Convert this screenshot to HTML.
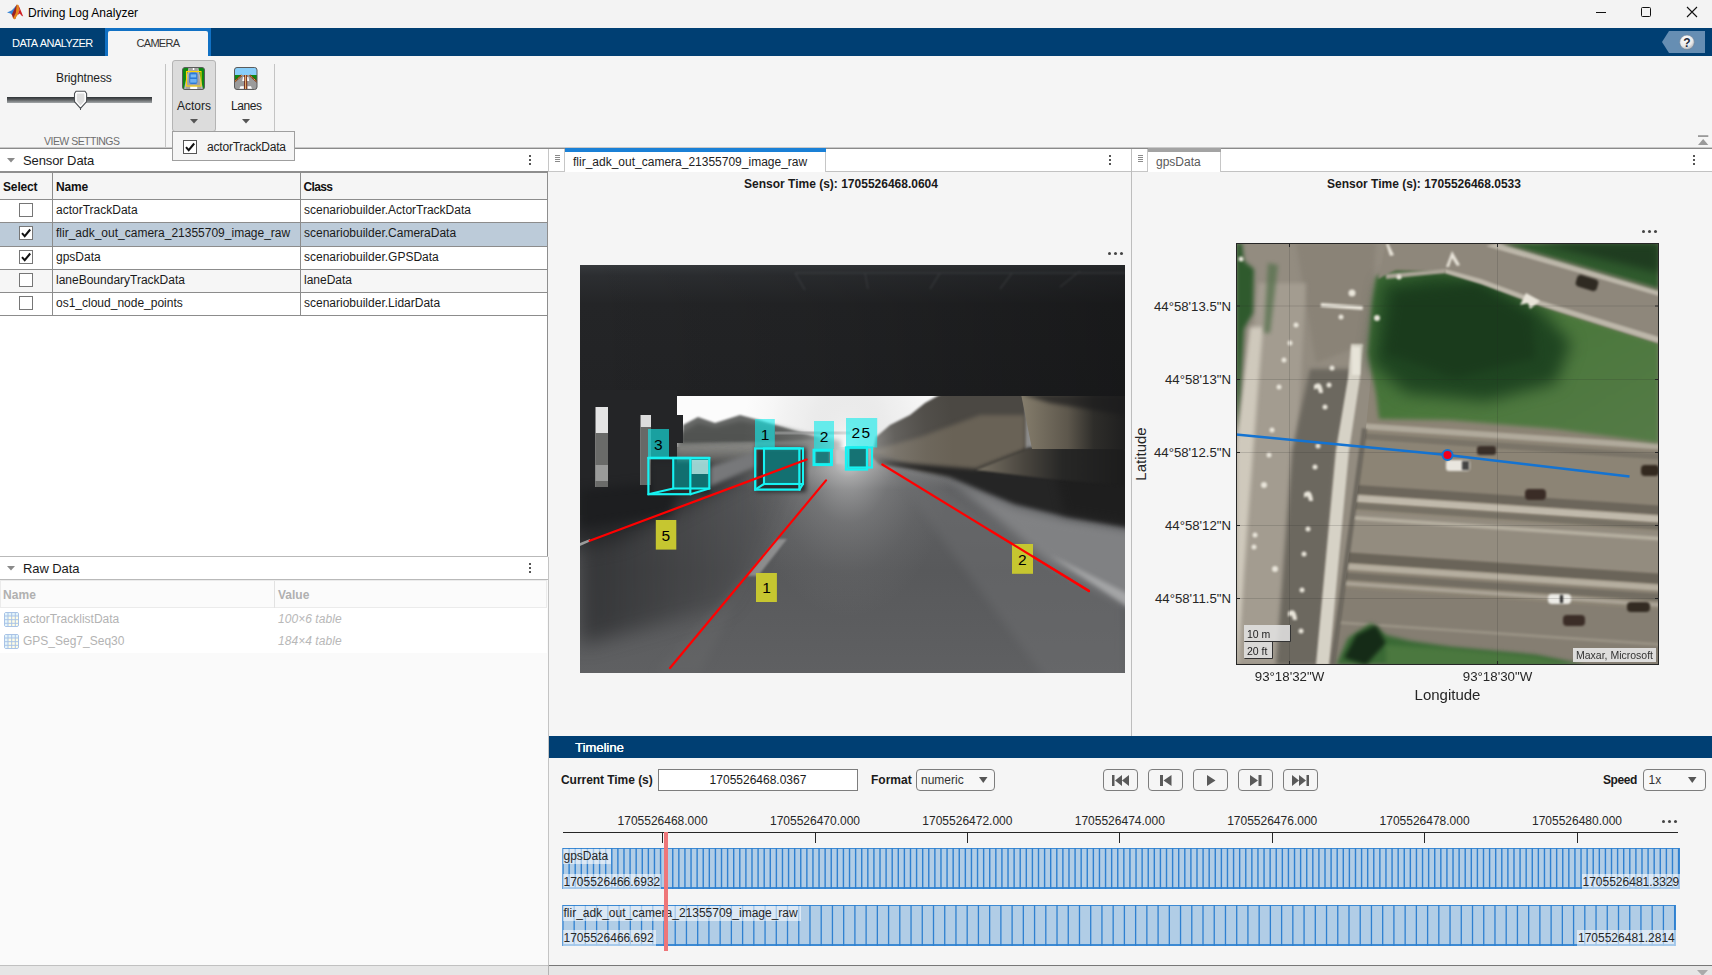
<!DOCTYPE html>
<html><head><meta charset="utf-8"><title>Driving Log Analyzer</title>
<style>
*{box-sizing:border-box;margin:0;padding:0}
html,body{width:1712px;height:975px;overflow:hidden;background:#f5f5f5;font-family:"Liberation Sans",sans-serif;font-size:12px;color:#1a1a1a}
.a{position:absolute}
.t{position:absolute;white-space:nowrap;line-height:14px}
#titlebar{left:0;top:0;width:1712px;height:28px;background:#f3f3f3}
#tabbar{left:0;top:28px;width:1712px;height:28px;background:#003f73}
#strip{left:0;top:56px;width:1712px;height:92px;background:#f5f5f5}
.sep{position:absolute;width:1px;background:#c4c4c4}
.cb{position:absolute;width:14px;height:14px;border:1px solid #767676;background:#fff}
.hl{position:absolute;height:1px;background:#8c8c8c}
.vl{position:absolute;width:1px;background:#8c8c8c}
.kebab{position:absolute;width:2px;height:2px;background:#555;box-shadow:0 4px 0 #555,0 8px 0 #555}
.dots{position:absolute;width:3px;height:3px;border-radius:50%;background:#444;box-shadow:6px 0 0 #444,12px 0 0 #444}
.btn{position:absolute;width:35px;height:22px;border:1px solid #7d7d7d;border-radius:4px;background:#f5f5f5}
</style></head><body>
<!-- TITLE BAR -->
<div class="a" id="titlebar"></div>
<svg class="a" style="left:6px;top:3px" width="19" height="18" viewBox="6 3 19 18"><path d="M7 12.600L11.500 10.400L13.800 8.200L16.800 4.800L15 10.500L12.300 15.200L10.500 13.400z" fill="#3a86d6"/><path d="M11.800 14.600L14 10L16.800 4.600L17.600 8.500L15.400 19L13 18z" fill="#9b2222"/><path d="M16.800 4.600L18.500 5L19.600 9.500L17.600 15L14.600 19.400L13 18.300L15.800 13z" fill="#e5861a"/><path d="M18.400 5L20.800 10.500L23.200 16.600L21.400 15.400L19.800 13.600L17.600 15L19.400 10z" fill="#cf1f25"/></svg>
<div class="t" style="left:28px;top:6px;font-size:12px;line-height:14px;color:#000">Driving Log Analyzer</div>
<div class="a" style="left:1596px;top:12px;width:10px;height:1px;background:#111"></div>
<div class="a" style="left:1641px;top:7px;width:10px;height:10px;border:1px solid #111;border-radius:1.500px"></div>
<svg class="a" style="left:1686px;top:6px" width="12" height="12"><path d="M1 1L11 11M11 1L1 11" stroke="#111" stroke-width="1.100"/></svg>
<!-- TAB BAR -->
<div class="a" id="tabbar"></div>
<div class="t" style="left:12px;top:36px;font-size:11px;color:#fff;letter-spacing:-0.55px;word-spacing:1px">DATA ANALYZER</div>
<div class="a" style="left:105px;top:28px;width:106px;height:28px;background:#1171c4"></div>
<div class="a" style="left:108px;top:31px;width:100px;height:25px;background:#f5f5f5;border-radius:2px 2px 0 0"></div>
<div class="t" style="left:136.5px;top:36px;font-size:11px;color:#333;letter-spacing:-0.7px">CAMERA</div>
<svg class="a" style="left:1660px;top:30px" width="46" height="24" viewBox="1660 30 46 24"><defs><radialGradient id="hg" cx=".4" cy=".3" r=".8"><stop offset="0" stop-color="#fff"/><stop offset=".6" stop-color="#eaeaea"/><stop offset="1" stop-color="#9aa0a8"/></radialGradient></defs><path d="M1662 42L1669 31H1705V53H1669z" fill="#668eb3"/><circle cx="1687" cy="42.300" r="7.300" fill="url(#hg)" stroke="#6c7f95" stroke-width=".6"/><text x="1687" y="46.500" text-anchor="middle" font-family="Liberation Sans,sans-serif" font-weight="bold" font-size="12" fill="#1f2a3a">?</text></svg>
<!-- TOOLSTRIP -->
<div class="a" id="strip"></div>

<div class="t" style="left:56px;top:71px;font-size:12px;color:#222;letter-spacing:-0.1px">Brightness</div>
<div class="a" style="left:7px;top:97px;width:145px;height:6px;background:linear-gradient(#2e3235,#55585a 40%,#a4a8aa)"></div>
<svg class="a" style="left:73px;top:90px" width="15" height="21" viewBox="0 0 15 21"><path d="M3 1.300h9L13.600 3.500V11.600L7.500 18.400 1.500 11.600V3.500z" fill="#fff" stroke="#4d5054" stroke-width="1.100" stroke-linejoin="round"/><path d="M3.800 3.500h7.600v7.500L7.500 15.600 3.800 11z" fill="#dedede"/><path d="M7.500 18v2" stroke="#4d5054" stroke-width="1"/></svg>
<div class="t" style="left:44px;top:134px;font-size:10.5px;color:#6e6e6e;letter-spacing:-0.52px">VIEW SETTINGS</div>
<div class="sep" style="left:165px;top:64px;height:84px"></div>
<div class="a" style="left:172px;top:60px;width:44px;height:72px;background:#dcdcdc;border:1px solid #b4b4b4;border-radius:3px"></div>
<svg class="a" style="left:181px;top:66px" width="25" height="25" viewBox="181 66 25 25"><defs><clipPath id="ica"><rect x="182.500" y="67.500" width="22" height="22" rx="2.500"/></clipPath></defs><g clip-path="url(#ica)"><rect x="182" y="67" width="23" height="23" fill="#0c8a12"/><path d="M188.600 67H198.200L203.200 90H183.800z" fill="#b9b9b9"/><path d="M189.800 67H197L201.400 90H185.600z" fill="#a3a3a3"/><rect x="192.800" y="68" width="1.500" height="2" fill="#fff"/><rect x="190.200" y="86.400" width="7" height="2.600" fill="#fff"/></g><rect x="182.500" y="67.500" width="22" height="22" rx="2.500" fill="none" stroke="#5b5b5b"/><rect x="186.500" y="71.500" width="14.500" height="14.500" fill="none" stroke="#ffd500" stroke-width="1.100"/><rect x="189.200" y="72.600" width="8.200" height="11.400" rx="2" fill="#2b7bd6"/><rect x="190.600" y="74.400" width="5.600" height="3" fill="#77b9f5"/><rect x="190.200" y="79" width="6.400" height="3.600" fill="#6db1f3"/></svg>
<div class="t" style="left:177px;top:99px;font-size:12px;color:#222">Actors</div>
<svg class="a" style="left:190px;top:119px" width="8" height="5"><path d="M0 0h8L4 4.500z" fill="#555"/></svg>
<svg class="a" style="left:233px;top:66px" width="26" height="25" viewBox="233 66 26 25"><defs><clipPath id="icl"><rect x="234.500" y="67.500" width="22.500" height="22" rx="2.500"/></clipPath></defs><g clip-path="url(#icl)"><rect x="234" y="67" width="24" height="23" fill="#9b9b9b"/><rect x="234" y="67" width="24" height="8" fill="#87cefa"/><path d="M234 75H241.800L234 82.500z" fill="#0c8a12"/><path d="M258 75H249.400L258 82.500z" fill="#0c8a12"/><path d="M241.800 75.200L234 82.200M249.600 75.200L257.500 82.200" stroke="#7a2f10" stroke-width="1.800"/><path d="M241.800 75.200L234 82.200M249.600 75.200L257.500 82.200" stroke="#ffc96b" stroke-width=".9" stroke-dasharray="1.200 .8"/><rect x="244.200" y="75" width="3" height="15" fill="#6a1d10"/><rect x="245.200" y="75" width="1" height="15" fill="#ffd27f"/><path d="M243 77H244.200V81H242.200zM247.200 77H248.400L249.200 81H247.200zM240.500 86.200H243.800V88.800H239.400zM247.600 86.200H251L252 88.800H247.600z" fill="#fff"/></g><rect x="234.500" y="67.500" width="22.500" height="22" rx="2.500" fill="none" stroke="#5b5b5b"/></svg>
<div class="t" style="left:231px;top:99px;font-size:12px;color:#222;letter-spacing:-0.45px">Lanes</div>
<svg class="a" style="left:242px;top:119px" width="8" height="5"><path d="M0 0h8L4 4.500z" fill="#555"/></svg>
<div class="sep" style="left:274px;top:64px;height:68px"></div>
<svg class="a" style="left:1697px;top:134px" width="13" height="12"><rect x="1" y="1.200" width="10.300" height="1.800" fill="#9a9a9a"/><path d="M1 11L6.200 5 11.300 11z" fill="#9a9a9a"/></svg>
<div class="a" style="left:0;top:147px;width:1712px;height:2px;background:linear-gradient(#c9c9c9,#c9c9c9 50%,#8a8a8a 50%)"></div>


<div class="a" style="left:0;top:149px;width:548px;height:407px;background:#fff"></div>
<svg class="a" style="left:7px;top:158px" width="9" height="5"><path d="M0 0h8L4 4.500z" fill="#8a8a8a"/></svg>
<div class="t" style="left:23px;top:153px;font-size:13px;line-height:15px;color:#1a1a1a;letter-spacing:-0.1px">Sensor Data</div>
<div class="kebab" style="left:529px;top:155px"></div>
<div class="a" style="left:0;top:171px;width:548px;height:2px;background:#8e8e8e"></div>
<div class="a" style="left:0;top:173px;width:547px;height:26px;background:#f5f5f5"></div>
<div class="t" style="left:3px;top:180px;font-weight:bold;font-size:12px;color:#111;letter-spacing:-0.15px">Select</div>
<div class="t" style="left:56px;top:180px;font-weight:bold;font-size:12px;color:#111;letter-spacing:-0.15px">Name</div>
<div class="t" style="left:303.5px;top:180px;font-weight:bold;font-size:12px;color:#111;letter-spacing:-0.65px">Class</div>
<div class="a" style="left:0;top:200px;width:547px;height:22px;background:#fff"></div>
<div class="cb" style="left:19px;top:203px"></div><div class="t" style="left:56px;top:203px">actorTrackData</div><div class="t" style="left:304px;top:203px">scenariobuilder.ActorTrackData</div>
<div class="a" style="left:0;top:223px;width:547px;height:23px;background:#bccbd9"></div>
<div class="cb" style="left:19px;top:226px"></div><svg class="a" style="left:19px;top:226px" width="14" height="14" viewBox="0 0 14 14"><path d="M3 7.200L5.700 10.200 11.200 3.500" fill="none" stroke="#111" stroke-width="2"/></svg><div class="t" style="left:56px;top:226px">flir_adk_out_camera_21355709_image_raw</div><div class="t" style="left:304px;top:226px">scenariobuilder.CameraData</div>
<div class="a" style="left:0;top:247px;width:547px;height:22px;background:#fff"></div>
<div class="cb" style="left:19px;top:250px"></div><svg class="a" style="left:19px;top:250px" width="14" height="14" viewBox="0 0 14 14"><path d="M3 7.200L5.700 10.200 11.200 3.500" fill="none" stroke="#111" stroke-width="2"/></svg><div class="t" style="left:56px;top:250px">gpsData</div><div class="t" style="left:304px;top:250px">scenariobuilder.GPSData</div>
<div class="a" style="left:0;top:270px;width:547px;height:22px;background:#f6f6f6"></div>
<div class="cb" style="left:19px;top:273px"></div><div class="t" style="left:56px;top:273px">laneBoundaryTrackData</div><div class="t" style="left:304px;top:273px">laneData</div>
<div class="a" style="left:0;top:293px;width:547px;height:22px;background:#fff"></div>
<div class="cb" style="left:19px;top:296px"></div><div class="t" style="left:56px;top:296px">os1_cloud_node_points</div><div class="t" style="left:304px;top:296px">scenariobuilder.LidarData</div>
<div class="hl" style="left:0;top:199px;width:548px"></div><div class="hl" style="left:0;top:222px;width:548px"></div><div class="hl" style="left:0;top:246px;width:548px"></div><div class="hl" style="left:0;top:269px;width:548px"></div><div class="hl" style="left:0;top:292px;width:548px"></div><div class="hl" style="left:0;top:315px;width:548px"></div>
<div class="vl" style="left:52px;top:173px;height:143px"></div>
<div class="vl" style="left:300px;top:173px;height:143px"></div>
<div class="a" style="left:547px;top:171px;width:1px;height:385px;background:#8e8e8e"></div>
<div class="a" style="left:548px;top:149px;width:3px;height:826px;background:#f5f5f5"></div>
<div class="a" style="left:548px;top:557px;width:1px;height:408px;background:#c4c4c4"></div>
<!-- raw data -->
<div class="a" style="left:0;top:556px;width:548px;height:1px;background:#b9b9b9"></div>
<div class="a" style="left:0;top:557px;width:548px;height:22px;background:#fff"></div>
<svg class="a" style="left:7px;top:566px" width="9" height="5"><path d="M0 0h8L4 4.500z" fill="#8a8a8a"/></svg>
<div class="t" style="left:23px;top:561px;font-size:13px;line-height:15px;color:#1a1a1a;letter-spacing:-0.1px">Raw Data</div>
<div class="kebab" style="left:529px;top:563px"></div>
<div class="a" style="left:0;top:579px;width:548px;height:1px;background:#b9b9b9"></div>
<div class="a" style="left:0;top:580px;width:548px;height:385px;background:#fafafa"></div>
<div class="a" style="left:0;top:580px;width:547px;height:28px;background:#fbfbfb;border:1px solid #ebebeb"></div>
<div class="a" style="left:274px;top:581px;width:1px;height:27px;background:#e2e2e2"></div>
<div class="t" style="left:3px;top:588px;font-weight:bold;font-size:12px;color:#b0b0b0;letter-spacing:.1px">Name</div>
<div class="t" style="left:278px;top:588px;font-weight:bold;font-size:12px;color:#b0b0b0">Value</div>
<div class="a" style="left:0;top:608px;width:547px;height:45px;background:#fff"></div>
<svg class="a" style="left:4px;top:612px" width="15" height="15" viewBox="0 0 15 15"><rect x=".5" y=".5" width="14" height="14" rx="1.500" fill="#fffde6" stroke="#a9c3e6"/><path d="M1 1H14V4H4V14H1z" fill="#e3f4fb"/><path d="M4 .5V14.500M7.700 .5V14.500M11.300 .5V14.500M.5 4H14.500M.5 7.700H14.500M.5 11.300H14.500" stroke="#a9c3e6" stroke-width="1"/></svg><svg class="a" style="left:4px;top:634px" width="15" height="15" viewBox="0 0 15 15"><rect x=".5" y=".5" width="14" height="14" rx="1.500" fill="#fffde6" stroke="#a9c3e6"/><path d="M1 1H14V4H4V14H1z" fill="#e3f4fb"/><path d="M4 .5V14.500M7.700 .5V14.500M11.300 .5V14.500M.5 4H14.500M.5 7.700H14.500M.5 11.300H14.500" stroke="#a9c3e6" stroke-width="1"/></svg>
<div class="t" style="left:23px;top:612px;color:#b3b3b3">actorTracklistData</div>
<div class="t" style="left:278px;top:612px;color:#b8b8b8;font-style:italic;font-size:12px;letter-spacing:.05px">100×6 table</div>
<div class="t" style="left:23px;top:634px;color:#b3b3b3">GPS_Seg7_Seq30</div>
<div class="t" style="left:278px;top:634px;color:#b8b8b8;font-style:italic;font-size:12px;letter-spacing:.05px">184×4 table</div>
<div class="a" style="left:0;top:965px;width:1712px;height:10px;background:#e6e6e6;border-top:1px solid #c0c0c0"></div><div class="a" style="left:549px;top:965px;width:1163px;height:1px;background:#777"></div><div class="a" style="left:548px;top:965px;width:1px;height:10px;background:#b4b4b4"></div>


<div class="a" style="left:551px;top:149px;width:1161px;height:588px;background:#f5f5f5"></div>
<!-- mid tab strip -->
<div class="a" style="left:548px;top:149px;width:584px;height:23px;background:#fff;border-bottom:1px solid #c2c2c2"></div>
<div class="a" style="left:548px;top:149px;width:17px;height:23px;background:#fff;border:1px solid #c6c6c6;border-top:none"></div>
<div class="a grip" style="left:555px;top:155px;width:5px;height:1px;background:#8a8a8a;box-shadow:0 2px 0 #8a8a8a,0 4px 0 #8a8a8a,0 6px 0 #8a8a8a"></div>
<div class="a" style="left:565px;top:148px;width:261px;height:24px;background:#fff;border-right:1px solid #c6c6c6"></div>
<div class="a" style="left:565px;top:148px;width:261px;height:4px;background:#1a80d6"></div>
<div class="t" style="left:573px;top:155px;color:#222">flir_adk_out_camera_21355709_image_raw</div>
<div class="kebab" style="left:1109px;top:155px"></div>
<div class="t" style="left:551px;top:177px;width:580px;text-align:center;font-weight:bold;font-size:12px;color:#1a1a1a">Sensor Time (s): 1705526468.0604</div>
<div class="dots" style="left:1108px;top:252px"></div>
<!--CAMSTART--><svg class="a" style="left:580px;top:265px" width="545" height="408" viewBox="0 0 545 408">
<defs>
<linearGradient id="rd" x1="0" y1="0" x2="0" y2="1"><stop offset="0" stop-color="#7d7d7d"/><stop offset=".46" stop-color="#909090"/><stop offset=".55" stop-color="#606163"/><stop offset=".75" stop-color="#58595b"/><stop offset="1" stop-color="#5f6062"/></linearGradient>
<linearGradient id="ceil" x1="0" y1="0" x2="0" y2="1"><stop offset="0" stop-color="#36393c"/><stop offset=".08" stop-color="#2c2e31"/><stop offset=".3" stop-color="#242527"/><stop offset="1" stop-color="#222325"/></linearGradient>
<linearGradient id="ceilr" x1="0" y1="0" x2="1" y2="0"><stop offset="0" stop-color="#000" stop-opacity="0"/><stop offset=".45" stop-color="#000" stop-opacity=".1"/><stop offset="1" stop-color="#000" stop-opacity=".32"/></linearGradient>
<linearGradient id="leftdk" x1="0" y1="0" x2="1" y2="0"><stop offset="0" stop-color="#1c1d1f" stop-opacity=".6"/><stop offset=".6" stop-color="#1c1d1f" stop-opacity=".25"/><stop offset="1" stop-color="#1c1d1f" stop-opacity="0"/></linearGradient>
<radialGradient id="glow" cx="268" cy="182" r="170" gradientUnits="userSpaceOnUse" gradientTransform="translate(268 182) scale(.62 1) translate(-268 -182)"><stop offset="0" stop-color="#fff" stop-opacity=".85"/><stop offset=".18" stop-color="#dcdcdc" stop-opacity=".5"/><stop offset=".45" stop-color="#bbb" stop-opacity=".22"/><stop offset=".75" stop-color="#aaa" stop-opacity=".07"/><stop offset="1" stop-color="#aaa" stop-opacity="0"/></radialGradient>
<linearGradient id="abut" x1="0" y1="0" x2="1" y2="0"><stop offset="0" stop-color="#857d6c"/><stop offset=".45" stop-color="#5d574c"/><stop offset=".7" stop-color="#2e2d2a"/><stop offset="1" stop-color="#1f1f1f"/></linearGradient>
<linearGradient id="slope" x1="0" y1="0" x2="1" y2="0"><stop offset="0" stop-color="#7a7365"/><stop offset=".32" stop-color="#4a463f"/><stop offset=".58" stop-color="#272726"/><stop offset="1" stop-color="#1c1c1c"/></linearGradient>
<filter id="b1" color-interpolation-filters="sRGB" x="-50%" y="-50%" width="200%" height="200%"><feGaussianBlur stdDeviation="1"/></filter>
<filter id="b2" color-interpolation-filters="sRGB" x="-50%" y="-50%" width="200%" height="200%"><feGaussianBlur stdDeviation="2"/></filter>
<filter id="b5" color-interpolation-filters="sRGB" x="-50%" y="-50%" width="200%" height="200%"><feGaussianBlur stdDeviation="5"/></filter>
<filter id="b10" color-interpolation-filters="sRGB" x="-50%" y="-50%" width="200%" height="200%"><feGaussianBlur stdDeviation="10"/></filter>
<clipPath id="cc"><rect width="545" height="408"/></clipPath>
</defs>
<g clip-path="url(#cc)">
<rect width="545" height="408" fill="url(#rd)"/>
<!-- sky -->
<rect x="90" y="120" width="300" height="62" fill="#fcfcfc"/>
<!-- left distant scene -->
<path d="M97 170 L118 158 L135 162 L160 156 L200 162 L240 172 L262 176 L262 200 L97 215z" fill="#6e706e" filter="url(#b2)"/>
<path d="M103 160 L118 152 L135 158 L160 150 L175 154 L205 163 L240 174 L180 177 L103 178z" fill="#4e504e" opacity=".85" filter="url(#b1)"/>
<path d="M97 180 L175 178 L175 195 L97 205z" fill="#8e8e8a" filter="url(#b2)"/>
<!-- distant overpass -->
<rect x="195" y="166.500" width="75" height="3" fill="#8d8f8f" opacity=".8"/>
<!-- right trees & hillside -->
<path d="M292 192 L296 172 L310 160 L330 150 L345 138 L361 129 L445 129 L445 200 L395 210 L300 200z" fill="#4b4843" filter="url(#b1)"/>
<path d="M290 186 L340 172 L400 150 L445 150 L445 200 L400 212 L340 205z" fill="#696256" filter="url(#b2)"/>
<!-- glow at vanishing point -->
<rect x="100" y="110" width="360" height="298" fill="url(#glow)"/>
<!-- road left darkness -->
<path d="M0 190 L230 190 L150 340 L0 380z" fill="url(#leftdk)" filter="url(#b10)"/>
<path d="M-20 205 L190 195 L40 275 L-20 285z" fill="#202123" opacity=".8" filter="url(#b10)"/>
<!-- median barrier -->
<path d="M110 208 L175 187 L180 200 L115 228z" fill="#77787a" filter="url(#b2)"/>
<!-- right shoulder light -->
<path d="M300 190 L545 330 L545 420 L470 420z" fill="#6d6e70" opacity=".5" filter="url(#b5)"/>
<path d="M369 214 L435 242 L484 254 L565 268 L565 350 L470 298z" fill="#8a8b8d" opacity=".8" filter="url(#b5)"/>
<path d="M470 290 L560 335 L560 350z" fill="#b5b6b7" opacity=".7" filter="url(#b2)"/>
<!-- right shadow band -->
<path d="M296 196 L396 204 L449 183 L570 183 L570 266 L484 251 L435 239 L369 212z" fill="#232323" opacity=".96" filter="url(#b2)"/>
<path d="M470 183 L570 183 L570 262 L484 248z" fill="#1d1d1d" opacity=".8" filter="url(#b5)"/>
<!-- slope paving -->
<path d="M396 205 L449 183 L545 183 L545 221 L470 214z" fill="url(#slope)" filter="url(#b1)"/>
<!-- abutment -->
<path d="M441 129 L545 129 L545 184 L452 184z" fill="url(#abut)"/>
<path d="M441 129 L545 129 L545 150 L470 138z" fill="#1c1c1d" opacity=".7" filter="url(#b2)"/>
<!-- bridge ceiling -->
<rect x="0" y="0" width="545" height="131" fill="url(#ceil)"/>
<rect x="0" y="0" width="545" height="131" fill="url(#ceilr)"/>
<path d="M215 8 L545 8 M215 8 L225 25 M285 8 L288 24 M350 24 L360 8 M420 24 L432 8 M480 22 L500 6" stroke="#4a4d50" stroke-width="1.500" opacity=".4" filter="url(#b1)"/>
<!-- left pillar mass -->
<path d="M0 125 L97 125 L97 150 L103 150 L103 178 L97 178 L97 215 L110 225 L60 245 L0 250z" fill="#242527"/>
<path d="M0 225 L100 215 L90 250 L0 262z" fill="#1d1e20" filter="url(#b5)"/>
<rect x="15.500" y="142" width="12.500" height="80" fill="#e4e4e4"/>
<rect x="15.500" y="168" width="12.500" height="54" fill="#6a6b69"/>
<rect x="15.500" y="200" width="12.500" height="16" fill="#9a9b9a"/>
<rect x="60.500" y="150" width="10.500" height="70" fill="#dcdcdc"/>
<rect x="60.500" y="162" width="10.500" height="58" fill="#676866"/>
<!-- lane stripe hints -->
<path d="M197 274 L207 274 L178 311 L167 311z" fill="#a9a9a9" opacity=".65" filter="url(#b1)"/><path d="M150 330 L175 300 L120 408 L75 408z" fill="#6a6b6c" opacity=".35" filter="url(#b5)"/>
<path d="M0 278 L10 274 L10 276.500 L0 281z" fill="#b5b5b5" opacity=".8"/>
<rect x="235.5" y="186.0" width="14" height="13" fill="#3f4143" filter="url(#b1)"/><rect x="268.0" y="183.0" width="19" height="20" fill="#2f3133" filter="url(#b1)"/><rect x="256.0" y="185.0" width="10" height="14" fill="#c9c9c9" filter="url(#b1)"/>
<rect x="176" y="183" width="50" height="44" fill="#2a2c2e" filter="url(#b2)"/>
<rect x="72" y="197" width="58" height="32" fill="#26282a" filter="url(#b2)"/>
<rect x="93.5" y="193" width="35.5" height="30.5" fill="rgba(0,170,170,.55)" stroke="none" stroke-width="0" />
<rect x="111.5" y="195" width="17" height="14" fill="#c9f3f0" opacity=".75"/>
<rect x="93.2" y="193" width="36.1" height="30.5" fill="none" stroke="#16f2f2" stroke-width="2.1" />
<rect x="68.4" y="193" width="41.9" height="36.2" fill="none" stroke="#16f2f2" stroke-width="2.2" />
<line x1="68.4" y1="229.2" x2="93.2" y2="223.5" stroke="#16f2f2" stroke-width="2.1" stroke-linecap="round"/>
<line x1="110.3" y1="229.2" x2="129.3" y2="223.5" stroke="#16f2f2" stroke-width="2.1" stroke-linecap="round"/>
<line x1="68.4" y1="193" x2="129.3" y2="193" stroke="#16f2f2" stroke-width="2.3" stroke-linecap="round"/>
<rect x="184" y="183.5" width="35.4" height="35.5" fill="rgba(0,170,170,.55)" stroke="none" stroke-width="0" />
<rect x="175.2" y="183.4" width="44.2" height="41.2" fill="none" stroke="#16f2f2" stroke-width="2.3" />
<rect x="184" y="183.4" width="39" height="35.6" fill="none" stroke="#16f2f2" stroke-width="2.1" />
<line x1="175.2" y1="224.6" x2="184" y2="219" stroke="#16f2f2" stroke-width="2.1" stroke-linecap="round"/>
<line x1="219.4" y1="224.6" x2="223" y2="219" stroke="#16f2f2" stroke-width="2.1" stroke-linecap="round"/>
<rect x="235.5" y="186" width="14.0" height="12.5" fill="rgba(0,170,170,.55)" stroke="none" stroke-width="0" />
<rect x="234" y="185.2" width="17.5" height="14.4" fill="none" stroke="#16f2f2" stroke-width="3" />
<rect x="268.4" y="183" width="18.4" height="20" fill="rgba(0,170,170,.55)" stroke="none" stroke-width="0" />
<rect x="266" y="182.5" width="21" height="22.0" fill="none" stroke="#16f2f2" stroke-width="2.3" />
<rect x="268.4" y="182.5" width="23.6" height="20.0" fill="none" stroke="#16f2f2" stroke-width="2.1" />
<line x1="9.7" y1="275.8" x2="226.6" y2="194.5" stroke="#ff0000" stroke-width="2.2" stroke-linecap="round"/>
<line x1="90" y1="403" x2="246" y2="215.4" stroke="#ff0000" stroke-width="2.2" stroke-linecap="round"/>
<line x1="302.3" y1="199.5" x2="509" y2="326" stroke="#ff0000" stroke-width="2.2" stroke-linecap="round"/>
<rect x="68" y="164" width="21" height="28" fill="rgba(20,235,235,.62)"/><text x="78.4" y="184.6" text-anchor="middle" font-family="Liberation Sans,sans-serif" font-size="15.500" fill="#000">3</text>
<rect x="175" y="154" width="19.8" height="28.4" fill="rgba(20,235,235,.62)"/><text x="185" y="174.6" text-anchor="middle" font-family="Liberation Sans,sans-serif" font-size="15.500" fill="#000">1</text>
<rect x="234" y="156" width="20" height="28" fill="rgba(20,235,235,.62)"/><text x="244" y="176.7" text-anchor="middle" font-family="Liberation Sans,sans-serif" font-size="15.500" fill="#000">2</text>
<rect x="266" y="153" width="31.2" height="29.5" fill="rgba(20,235,235,.62)"/><text x="281.5" y="173.2" text-anchor="middle" font-family="Liberation Sans,sans-serif" font-size="15.500" fill="#000" letter-spacing="1.500">25</text>
<rect x="75.8" y="255" width="20.5" height="29.6" fill="#c6c630"/><text x="85.8" y="275.5" text-anchor="middle" font-family="Liberation Sans,sans-serif" font-size="15.500" fill="#000">5</text>
<rect x="176" y="308" width="20.9" height="29" fill="#c6c630"/><text x="186.5" y="327.8" text-anchor="middle" font-family="Liberation Sans,sans-serif" font-size="15.500" fill="#000">1</text>
<rect x="432" y="279" width="21" height="29.8" fill="#c6c630"/><text x="442.3" y="299.6" text-anchor="middle" font-family="Liberation Sans,sans-serif" font-size="15.500" fill="#000">2</text>
<line x1="410" y1="265.4" x2="509" y2="326" stroke="#ff0000" stroke-width="2.2" stroke-linecap="round"/>
</g>
</svg>
<!--CAMEND-->
<div class="a" style="left:1131px;top:149px;width:1px;height:588px;background:#bdbdbd"></div>


<div class="a" style="left:1132px;top:149px;width:580px;height:23px;background:#fff;border-bottom:1px solid #c2c2c2"></div>
<div class="a" style="left:1132px;top:149px;width:16px;height:23px;background:#fff;border:1px solid #c6c6c6;border-top:none;border-left:none"></div>
<div class="a grip" style="left:1138px;top:155px;width:5px;height:1px;background:#8a8a8a;box-shadow:0 2px 0 #8a8a8a,0 4px 0 #8a8a8a,0 6px 0 #8a8a8a"></div>
<div class="a" style="left:1148px;top:148px;width:73px;height:24px;background:#fff;border-right:1px solid #c6c6c6"></div>
<div class="a" style="left:1148px;top:148px;width:73px;height:4px;background:#a3a3a3"></div>
<div class="t" style="left:1156px;top:155px;color:#5a5a5a">gpsData</div>
<div class="kebab" style="left:1693px;top:155px"></div>
<div class="t" style="left:1132px;top:177px;width:584px;text-align:center;font-weight:bold;font-size:12px;color:#1a1a1a">Sensor Time (s): 1705526468.0533</div>
<div class="dots" style="left:1642px;top:230px"></div>
<!--MAPSTART--><svg class="a" style="left:1236px;top:243px" width="423" height="422" viewBox="0 0 423 422">
<defs>
<filter id="m1" color-interpolation-filters="sRGB" x="-50%" y="-50%" width="200%" height="200%"><feGaussianBlur stdDeviation="0.8"/></filter>
<filter id="m2" color-interpolation-filters="sRGB" x="-50%" y="-50%" width="200%" height="200%"><feGaussianBlur stdDeviation="2"/></filter>
<filter id="m4" color-interpolation-filters="sRGB" x="-50%" y="-50%" width="200%" height="200%"><feGaussianBlur stdDeviation="4"/></filter>
<filter id="m8" color-interpolation-filters="sRGB" x="-50%" y="-50%" width="200%" height="200%"><feGaussianBlur stdDeviation="8"/></filter>
<clipPath id="mc"><rect width="423" height="422"/></clipPath>
<linearGradient id="grass" x1="0" y1="0" x2="1" y2="1"><stop offset="0" stop-color="#3a6a34"/><stop offset=".5" stop-color="#4b783c"/><stop offset="1" stop-color="#557b47"/></linearGradient>
</defs>
<g clip-path="url(#mc)">
<rect width="423" height="422" fill="#8c8475"/>
<!-- freeway bands -->
<g transform="rotate(3.900 209 260)">
<rect x="100" y="186" width="420" height="6" fill="#b0a99b" filter="url(#m1)"/>
<rect x="100" y="196" width="420" height="6" fill="#7a7468" filter="url(#m1)"/>
<rect x="90" y="248" width="420" height="9" fill="#6c665b" filter="url(#m1)"/>
<rect x="90" y="258" width="420" height="7" fill="#c0b9ab" filter="url(#m1)"/>
<rect x="90" y="266" width="420" height="6" fill="#777165" filter="url(#m1)"/>
<rect x="85" y="274" width="440" height="42" fill="#938c7f" filter="url(#m1)"/>
<rect x="85" y="279" width="440" height="4" fill="#b4ad9f" filter="url(#m1)"/>
<rect x="80" y="316" width="440" height="10" fill="#6a6459" filter="url(#m1)"/>
<rect x="80" y="327" width="440" height="6" fill="#b5ae9f" filter="url(#m1)"/>
<rect x="80" y="336" width="440" height="7" fill="#736d62" filter="url(#m1)"/>
<rect x="80" y="345" width="440" height="4" fill="#aaa395" filter="url(#m1)"/>
<rect x="70" y="352" width="450" height="80" fill="#857e72" filter="url(#m1)"/>
<rect x="70" y="385" width="450" height="3" fill="#a19a8c" filter="url(#m1)" opacity=".7"/>
</g>
<!-- bridge shadow edge on freeway -->

<!-- overpass deck -->
<path d="M0 0 L150 0 L142 60 L130 185 L98 422 L0 422z" fill="#938c80"/>
<path d="M60 0 L140 0 L132 100 L80 120z" fill="#8a8377" filter="url(#m2)"/>
<!-- left lanes lighter -->
<path d="M22 40 L70 40 L50 422 L0 422 L0 260z" fill="#a39c90" filter="url(#m2)"/>
<path d="M14 84 L27 84 L17 210 L8 330 L2 422 L0 422 L0 200z" fill="#cfc9bc" filter="url(#m2)"/>
<!-- dark asphalt band -->
<path d="M74 126 L118 126 L100 208 L82 422 L40 422 L56 208z" fill="#6c685f" filter="url(#m2)"/>
<!-- white sidewalk -->
<path d="M115 101 L127 101 L124 135 L113 208 L93 422 L80 422 L100 208 L112 135z" fill="#d6d2c6" filter="url(#m1)"/>
<path d="M126 185 L131 186 L99 422 L94 422z" fill="#5e5a52" filter="url(#m1)" opacity=".7"/>
<!-- left green strip -->
<path d="M0 0 L6 0 L8 18 L18 26 L17 70 L8 86 L4 150 L0 190z" fill="#2f5a2d" filter="url(#m2)"/>
<path d="M32 20 L42 22 L34 90 L28 90z" fill="#5a7350" filter="url(#m2)" opacity=".8"/>
<!-- green block -->
<path d="M140 34 L160 28 L209 30 L245 41 L299 61 L423 100 L423 200 L320 186 L214 177 L143 176 L140 150 L132 110 L136 60z" fill="url(#grass)" filter="url(#m2)"/>
<path d="M146 40 L200 30 L250 34 L305 66 L335 100 L320 140 L250 158 L170 150 L135 120z" fill="#1f4521" filter="url(#m8)"/>
<path d="M160 50 L240 42 L295 75 L300 115 L220 135 L150 110z" fill="#1a3a1c" filter="url(#m4)" opacity=".85"/>
<!-- ramp road -->
<path d="M150 0 L262 0 L423 48 L423 100 L299 60 L245 40 L209 29 L160 26 L142 36z" fill="#8e877b" filter="url(#m1)"/>
<path d="M209 26 L245 36 L299 56 L423 94 L423 100 L299 61 L245 41 L209 30z" fill="#bdb7aa" filter="url(#m1)"/>
<path d="M262 0 L423 48 L423 53 L250 3z" fill="#c3bdb0" filter="url(#m1)" opacity=".9"/>
<path d="M150 31 L209 26 L209 30 L150 36z" fill="#aaa497" filter="url(#m1)"/>
<!-- top-right green -->
<path d="M266 0 L423 0 L423 46z" fill="#2f5a2d" filter="url(#m2)"/>
<path d="M300 0 L423 0 L423 30z" fill="#1f3c20" filter="url(#m4)"/>
<!-- bottom trees/green -->
<path d="M100 422 L112 395 L135 380 L150 392 L175 398 L215 404 L300 412 L350 422z" fill="#3a6a35" filter="url(#m2)"/>
<path d="M108 415 L120 392 L140 382 L150 400 L130 422z" fill="#152b17" filter="url(#m2)"/>
<path d="M150 402 L215 406 L300 414 L340 422 L150 422z" fill="#4b783f" filter="url(#m2)"/>
<!-- cars -->
<g filter="url(#m1)">
<rect x="241" y="203" width="19" height="9" rx="3" fill="#3a2f28"/>
<rect x="210" y="217" width="24" height="11" rx="3" fill="#e9e6df"/><rect x="226" y="218" width="7" height="9" fill="#444"/>
<rect x="289" y="246" width="21" height="11" rx="4" fill="#3a2c26"/>
<rect x="405" y="222" width="18" height="11" rx="4" fill="#33291f"/>
<rect x="312" y="351" width="23" height="10" rx="4" fill="#ecebe6"/><rect x="324" y="352" width="3" height="8" fill="#222"/>
<rect x="327" y="372" width="22" height="11" rx="4" fill="#3b2d27"/>
<rect x="391" y="359" width="23" height="10" rx="4" fill="#332b22"/>
<rect x="340" y="34" width="22" height="12" rx="4" fill="#2f2a22" transform="rotate(17 351 40)"/>
</g>
<!-- light dots -->
<g fill="#e9e5da" filter="url(#m1)">
<circle cx="5" cy="16" r="2.500"/><circle cx="116" cy="50" r="3.500"/><circle cx="105" cy="74" r="2.500"/><circle cx="60" cy="82" r="2.500"/><circle cx="54" cy="100" r="2.500"/><circle cx="48" cy="117" r="2.500"/><circle cx="96" cy="125" r="2.500"/><circle cx="93" cy="142" r="2.500"/><circle cx="43" cy="144" r="2.500"/><circle cx="89" cy="164" r="2.500"/><circle cx="36" cy="187" r="2.500"/><circle cx="82" cy="203" r="2.500"/><circle cx="33" cy="212" r="2.500"/><circle cx="28" cy="242" r="3"/><circle cx="79" cy="224" r="2.500"/><circle cx="19" cy="292" r="2.500"/><circle cx="72" cy="286" r="2.500"/><circle cx="18" cy="304" r="2.500"/><circle cx="68" cy="311" r="2.500"/><circle cx="39" cy="326" r="3"/><circle cx="66" cy="347" r="2.500"/><circle cx="65" cy="388" r="2.500"/><circle cx="163" cy="34" r="2.500"/><circle cx="141" cy="75" r="3"/>
<path d="M68 250 q8 -6 9 8 l-4 0 q-1-7 -5 -3z"/><path d="M52 369 q8 -6 9 8 l-4 0 q-1-7 -5 -3z"/><path d="M78 142 q8 -6 9 8 l-4 0 q-1-7 -5 -3z"/>
<rect x="85" y="60" width="42" height="4" transform="rotate(4 85 60)"/>
<rect x="116" y="104" width="8" height="28" opacity=".9"/>
<path d="M216 8 l8 14 l-3 1 l-5 -8 l-3 9 l-3 0z M152 0 l6 12 l-4 1 l-4 -12z M290 50 l14 8 l-10 8 l-2 -6 l-8 2z"/>
</g>
<!-- grid -->
<g stroke="#262626" stroke-opacity=".16" stroke-width="1">
<line x1="53.500" y1="0" x2="53.500" y2="422"/><line x1="261.500" y1="0" x2="261.500" y2="422"/>
<line x1="0" y1="63" x2="423" y2="63"/><line x1="0" y1="136.500" x2="423" y2="136.500"/><line x1="0" y1="209.500" x2="423" y2="209.500"/><line x1="0" y1="282.500" x2="423" y2="282.500"/><line x1="0" y1="355.500" x2="423" y2="355.500"/>
</g>
<!-- route -->
<path d="M0 191.500 L211.500 212 L393.500 233.500" stroke="#1473d1" stroke-width="2.400" fill="none"/>
<circle cx="211.500" cy="212" r="5" fill="#f1001c" stroke="#1473d1" stroke-width="2"/>
<!-- scale bars -->
<rect x="8" y="382" width="46" height="16" fill="#e4e4e4" fill-opacity=".85"/><path d="M8.500 398.500H54.500V382" stroke="#333" fill="none"/>
<rect x="8" y="399" width="28" height="16" fill="#e4e4e4" fill-opacity=".85"/><path d="M8.500 415.500H36.500V399" stroke="#333" fill="none"/>
<text x="11" y="394.500" font-family="Liberation Sans,sans-serif" font-size="10.500" fill="#222">10 m</text>
<text x="11" y="411.500" font-family="Liberation Sans,sans-serif" font-size="10.500" fill="#222">20 ft</text>
<rect x="337" y="405" width="83" height="14" fill="#ebebeb" fill-opacity=".88"/>
<text x="340" y="416" font-family="Liberation Sans,sans-serif" font-size="10.500" fill="#333">Maxar, Microsoft</text>
<!-- ticks -->
<g stroke="#262626" stroke-width="1"><path d="M0 63h4M0 136.500h4M0 209.500h4M0 282.500h4M0 355.500h4M423 63h-4M423 136.500h-4M423 209.500h-4M423 282.500h-4M423 355.500h-4M53.500 422v-4M261.500 422v-4M53.500 0v4M261.500 0v4"/></g>
</g>
<rect x=".5" y=".5" width="422" height="421" fill="none" stroke="#262626"/>
</svg>
<div class="t" style="left:1153px;top:299px;font-size:13.200px;line-height:16px;color:#262626;width:78px;text-align:right">44°58'13.5"N</div>
<div class="t" style="left:1153px;top:372px;font-size:13.200px;line-height:16px;color:#262626;width:78px;text-align:right">44°58'13"N</div>
<div class="t" style="left:1153px;top:445px;font-size:13.200px;line-height:16px;color:#262626;width:78px;text-align:right">44°58'12.5"N</div>
<div class="t" style="left:1153px;top:518px;font-size:13.200px;line-height:16px;color:#262626;width:78px;text-align:right">44°58'12"N</div>
<div class="t" style="left:1153px;top:591px;font-size:13.200px;line-height:16px;color:#262626;width:78px;text-align:right">44°58'11.5"N</div>
<div class="t" style="left:1239.500px;top:669px;font-size:13.300px;line-height:16px;color:#262626;width:100px;text-align:center">93°18'32"W</div>
<div class="t" style="left:1447.500px;top:669px;font-size:13.300px;line-height:16px;color:#262626;width:100px;text-align:center">93°18'30"W</div>
<div class="t" style="left:1397.500px;top:686px;font-size:15px;line-height:18px;color:#262626;width:100px;text-align:center">Longitude</div>
<div class="t" style="left:1111px;top:445px;font-size:15px;line-height:18px;color:#262626;width:60px;text-align:center;transform:rotate(-90deg)">Latitude</div>
<!--MAPEND-->


<div class="a" style="left:549px;top:736px;width:1163px;height:22px;background:#003f73"></div>
<div class="t" style="left:575px;top:740.5px;font-size:13px;color:#fff;text-shadow:0.3px 0 0 #fff">Timeline</div>
<div class="a" style="left:549px;top:758px;width:1163px;height:207px;background:#f5f5f5"></div>
<div class="t" style="left:561px;top:773px;font-weight:bold;color:#1a1a1a;letter-spacing:-0.05px">Current Time (s)</div>
<div class="a" style="left:658px;top:769px;width:200px;height:22px;background:#fff;border:1px solid #7d7d7d"></div>
<div class="t" style="left:658px;top:773px;width:200px;text-align:center;color:#1a1a1a">1705526468.0367</div>
<div class="t" style="left:871px;top:773px;font-weight:bold;color:#1a1a1a">Format</div>
<div class="a" style="left:916px;top:769px;width:79px;height:22px;background:#f7f7f7;border:1px solid #7d7d7d;border-radius:4px"></div>
<div class="t" style="left:921px;top:773px;color:#333">numeric</div>
<svg class="a" style="left:979px;top:777px" width="9" height="6"><path d="M0 0h8.500L4.250 6z" fill="#555"/></svg>
<div class="btn" style="left:1103px;top:769px"></div><svg class="a" style="left:1112.0px;top:774.500px" width="18" height="11" fill="#5a5a5a"><path d="M0 0h2.500v11H0zM10 0v11L3 5.500zM17 0v11L10 5.500z"/></svg>
<div class="btn" style="left:1148px;top:769px"></div><svg class="a" style="left:1159.8px;top:774.500px" width="18" height="11" fill="#5a5a5a"><path d="M0 0h3v11H0zM11.500 0v11L3.500 5.500z"/></svg>
<div class="btn" style="left:1193px;top:769px"></div><svg class="a" style="left:1206.8px;top:774.500px" width="18" height="11" fill="#5a5a5a"><path d="M0 0v11l8.500-5.500z"/></svg>
<div class="btn" style="left:1238px;top:769px"></div><svg class="a" style="left:1249.8px;top:774.500px" width="18" height="11" fill="#5a5a5a"><path d="M8.500 0h3v11h-3zM0 0v11l8-5.500z"/></svg>
<div class="btn" style="left:1283px;top:769px"></div><svg class="a" style="left:1292.0px;top:774.500px" width="18" height="11" fill="#5a5a5a"><path d="M14.500 0h2.500v11h-2.500zM7 0v11l7-5.500zM0 0v11l7-5.500z"/></svg>

<div class="t" style="left:1603px;top:773px;font-weight:bold;color:#1a1a1a;letter-spacing:-0.45px">Speed</div>
<div class="a" style="left:1643px;top:769px;width:63px;height:22px;background:#f7f7f7;border:1px solid #7d7d7d;border-radius:4px"></div>
<div class="t" style="left:1648.500px;top:773px;color:#333">1x</div>
<svg class="a" style="left:1688px;top:777px" width="9" height="6"><path d="M0 0h8.500L4.250 6z" fill="#555"/></svg>
<div class="dots" style="left:1662px;top:819.500px"></div>
<div class="a" style="left:563px;top:832px;width:1115px;height:1px;background:#262626"></div>
<div class="a" style="left:662.1px;top:832px;width:1px;height:11px;background:#262626"></div><div class="t" style="left:602.6px;top:814px;width:120px;text-align:center;color:#262626">1705526468.000</div>
<div class="a" style="left:814.5px;top:832px;width:1px;height:11px;background:#262626"></div><div class="t" style="left:755.0px;top:814px;width:120px;text-align:center;color:#262626">1705526470.000</div>
<div class="a" style="left:966.9px;top:832px;width:1px;height:11px;background:#262626"></div><div class="t" style="left:907.4px;top:814px;width:120px;text-align:center;color:#262626">1705526472.000</div>
<div class="a" style="left:1119.3px;top:832px;width:1px;height:11px;background:#262626"></div><div class="t" style="left:1059.8px;top:814px;width:120px;text-align:center;color:#262626">1705526474.000</div>
<div class="a" style="left:1271.7px;top:832px;width:1px;height:11px;background:#262626"></div><div class="t" style="left:1212.2px;top:814px;width:120px;text-align:center;color:#262626">1705526476.000</div>
<div class="a" style="left:1424.1px;top:832px;width:1px;height:11px;background:#262626"></div><div class="t" style="left:1364.6px;top:814px;width:120px;text-align:center;color:#262626">1705526478.000</div>
<div class="a" style="left:1576.5px;top:832px;width:1px;height:11px;background:#262626"></div><div class="t" style="left:1517.0px;top:814px;width:120px;text-align:center;color:#262626">1705526480.000</div>
<div class="a" style="left:562.5px;top:848px;width:1117.2px;height:41px;background:#b1cde6;border:1px solid #3d8ad3;border-bottom-width:2px;border-left:none"></div><svg class="a" style="left:560px;top:848px" width="1125" height="41"><path d="M3.02 0V41M9.12 0V41M15.21 0V41M21.31 0V41M27.41 0V41M33.50 0V41M39.60 0V41M45.69 0V41M51.79 0V41M57.88 0V41M63.98 0V41M70.08 0V41M76.17 0V41M82.27 0V41M88.36 0V41M94.46 0V41M100.56 0V41M106.65 0V41M112.75 0V41M118.84 0V41M124.94 0V41M131.04 0V41M137.13 0V41M143.23 0V41M149.32 0V41M155.42 0V41M161.51 0V41M167.61 0V41M173.71 0V41M179.80 0V41M185.90 0V41M191.99 0V41M198.09 0V41M204.19 0V41M210.28 0V41M216.38 0V41M222.47 0V41M228.57 0V41M234.67 0V41M240.76 0V41M246.86 0V41M252.95 0V41M259.05 0V41M265.14 0V41M271.24 0V41M277.34 0V41M283.43 0V41M289.53 0V41M295.62 0V41M301.72 0V41M307.82 0V41M313.91 0V41M320.01 0V41M326.10 0V41M332.20 0V41M338.29 0V41M344.39 0V41M350.49 0V41M356.58 0V41M362.68 0V41M368.77 0V41M374.87 0V41M380.97 0V41M387.06 0V41M393.16 0V41M399.25 0V41M405.35 0V41M411.45 0V41M417.54 0V41M423.64 0V41M429.73 0V41M435.83 0V41M441.92 0V41M448.02 0V41M454.12 0V41M460.21 0V41M466.31 0V41M472.40 0V41M478.50 0V41M484.60 0V41M490.69 0V41M496.79 0V41M502.88 0V41M508.98 0V41M515.08 0V41M521.17 0V41M527.27 0V41M533.36 0V41M539.46 0V41M545.55 0V41M551.65 0V41M557.75 0V41M563.84 0V41M569.94 0V41M576.03 0V41M582.13 0V41M588.23 0V41M594.32 0V41M600.42 0V41M606.51 0V41M612.61 0V41M618.71 0V41M624.80 0V41M630.90 0V41M636.99 0V41M643.09 0V41M649.18 0V41M655.28 0V41M661.38 0V41M667.47 0V41M673.57 0V41M679.66 0V41M685.76 0V41M691.86 0V41M697.95 0V41M704.05 0V41M710.14 0V41M716.24 0V41M722.34 0V41M728.43 0V41M734.53 0V41M740.62 0V41M746.72 0V41M752.81 0V41M758.91 0V41M765.01 0V41M771.10 0V41M777.20 0V41M783.29 0V41M789.39 0V41M795.49 0V41M801.58 0V41M807.68 0V41M813.77 0V41M819.87 0V41M825.96 0V41M832.06 0V41M838.16 0V41M844.25 0V41M850.35 0V41M856.44 0V41M862.54 0V41M868.64 0V41M874.73 0V41M880.83 0V41M886.92 0V41M893.02 0V41M899.12 0V41M905.21 0V41M911.31 0V41M917.40 0V41M923.50 0V41M929.59 0V41M935.69 0V41M941.79 0V41M947.88 0V41M953.98 0V41M960.07 0V41M966.17 0V41M972.27 0V41M978.36 0V41M984.46 0V41M990.55 0V41M996.65 0V41M1002.75 0V41M1008.84 0V41M1014.94 0V41M1021.03 0V41M1027.13 0V41M1033.22 0V41M1039.32 0V41M1045.42 0V41M1051.51 0V41M1057.61 0V41M1063.70 0V41M1069.80 0V41M1075.90 0V41M1081.99 0V41M1088.09 0V41M1094.18 0V41M1100.28 0V41M1106.38 0V41M1112.47 0V41M1118.57 0V41" stroke="#2f80d0" stroke-width="1.4" fill="none"/></svg>
<div class="a" style="left:562.5px;top:905px;width:1113.1px;height:41px;background:#b1cde6;border:1px solid #3d8ad3;border-bottom-width:2px;border-left:none"></div><svg class="a" style="left:560px;top:905px" width="1125" height="41"><path d="M2.93 0V41M14.16 0V41M25.39 0V41M36.62 0V41M47.85 0V41M59.08 0V41M70.31 0V41M81.54 0V41M92.77 0V41M104.00 0V41M115.22 0V41M126.45 0V41M137.68 0V41M148.91 0V41M160.14 0V41M171.37 0V41M182.60 0V41M193.83 0V41M205.06 0V41M216.29 0V41M227.52 0V41M238.75 0V41M249.98 0V41M261.21 0V41M272.44 0V41M283.67 0V41M294.90 0V41M306.12 0V41M317.35 0V41M328.58 0V41M339.81 0V41M351.04 0V41M362.27 0V41M373.50 0V41M384.73 0V41M395.96 0V41M407.19 0V41M418.42 0V41M429.65 0V41M440.88 0V41M452.11 0V41M463.34 0V41M474.57 0V41M485.80 0V41M497.02 0V41M508.25 0V41M519.48 0V41M530.71 0V41M541.94 0V41M553.17 0V41M564.40 0V41M575.63 0V41M586.86 0V41M598.09 0V41M609.32 0V41M620.55 0V41M631.78 0V41M643.01 0V41M654.24 0V41M665.47 0V41M676.70 0V41M687.92 0V41M699.15 0V41M710.38 0V41M721.61 0V41M732.84 0V41M744.07 0V41M755.30 0V41M766.53 0V41M777.76 0V41M788.99 0V41M800.22 0V41M811.45 0V41M822.68 0V41M833.91 0V41M845.14 0V41M856.37 0V41M867.60 0V41M878.82 0V41M890.05 0V41M901.28 0V41M912.51 0V41M923.74 0V41M934.97 0V41M946.20 0V41M957.43 0V41M968.66 0V41M979.89 0V41M991.12 0V41M1002.35 0V41M1013.58 0V41M1024.81 0V41M1036.04 0V41M1047.27 0V41M1058.50 0V41M1069.73 0V41M1080.95 0V41M1092.18 0V41M1103.41 0V41M1114.64 0V41" stroke="#2f80d0" stroke-width="1.3" fill="none"/></svg>
<div class="t" style="left:562.5px;top:849.0px;height:15.0px;width:48.5px;background:rgba(255,255,255,.55);padding-left:1px;color:#262626;line-height:14.0px">gpsData</div>
<div class="t" style="left:562.5px;top:874px;height:15px;width:98.5px;background:rgba(255,255,255,.55);padding-left:1px;color:#262626;line-height:16.0px">1705526466.6932</div>
<div class="t" style="left:1581.5px;top:874px;height:15px;width:98.0px;background:rgba(255,255,255,.55);padding-left:1px;color:#262626;line-height:16.0px">1705526481.3329</div>
<div class="t" style="left:562.5px;top:906.0px;height:15.0px;width:238.0px;background:rgba(255,255,255,.55);padding-left:1px;color:#262626;line-height:14.0px">flir_adk_out_camera_21355709_image_raw</div>
<div class="t" style="left:562.5px;top:930px;height:15.5px;width:93.0px;background:rgba(255,255,255,.55);padding-left:1px;color:#262626;line-height:16.0px">1705526466.692</div>
<div class="t" style="left:1577.0px;top:930px;height:15.5px;width:98.5px;background:rgba(255,255,255,.55);padding-left:1px;color:#262626;line-height:16.0px">1705526481.2814</div>
<div class="a" style="left:663.500px;top:832px;width:4px;height:119px;background:#ee7679"></div>
<svg class="a" style="left:1697px;top:966px" width="12" height="9"><path d="M0 4h11L5.500 10z" fill="#aaa"/></svg>
<div class="a" style="left:172px;top:131px;width:123px;height:30px;background:#f5f5f5;border:1px solid #9f9f9f"></div>
<div class="cb" style="left:183px;top:140px;border-color:#555"></div>
<svg class="a" style="left:183px;top:140px" width="14" height="14" viewBox="0 0 14 14"><path d="M3 7.200L5.700 10.200 11.200 3.500" fill="none" stroke="#111" stroke-width="2"/></svg>
<div class="t" style="left:207px;top:140px;font-size:12px;color:#222;letter-spacing:-0.2px">actorTrackData</div>
</body></html>
